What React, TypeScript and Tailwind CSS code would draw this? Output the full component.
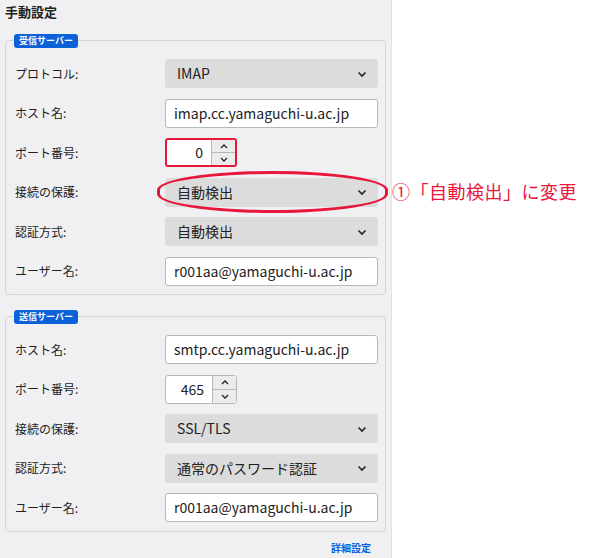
import React from "react";

const font = { fontFamily: '"Noto Sans CJK JP", "Noto Sans", sans-serif' };

function Chevron() {
  return (
    <svg width="12" height="12" viewBox="0 0 12 12" className="mr-[10px]">
      <path d="M2.5 4.5 L6 8 L9.5 4.5" fill="none" stroke="#222" strokeWidth="1.6" />
    </svg>
  );
}

function Select({ value }: { value: string }) {
  return (
    <div className="w-[213px] h-[29px] bg-[#dcdcdc] rounded-[3px] flex items-center justify-between">
      <span className="pl-3 text-[14px] text-[#222]">{value}</span>
      <Chevron />
    </div>
  );
}

function Input({ value }: { value: string }) {
  return (
    <div className="w-[213px] h-[29px] bg-white border border-[#b8b8b8] rounded-[3px] flex items-center">
      <span className="pl-2 text-[14px] text-[#222]">{value}</span>
    </div>
  );
}

function Spin({ value, red }: { value: string; red?: boolean }) {
  return (
    <div className={`w-[72px] h-[29px] bg-white rounded-[3px] flex ${red ? "border-2 border-[#e8163a]" : "border border-[#b8b8b8]"}`}>
      <div className="flex-1 flex items-center justify-end pr-2 text-[14px] text-[#222]">{value}</div>
      <div className="w-[24px] flex flex-col border-l border-[#b8b8b8]">
        <div className="flex-1 flex items-center justify-center bg-[#ececec] border-b border-[#b8b8b8]">
          <svg width="10" height="7" viewBox="0 0 10 7"><path d="M2 5 L5 2 L8 5" fill="none" stroke="#222" strokeWidth="1.3" /></svg>
        </div>
        <div className="flex-1 flex items-center justify-center bg-[#ececec]">
          <svg width="10" height="7" viewBox="0 0 10 7"><path d="M2 2 L5 5 L8 2" fill="none" stroke="#222" strokeWidth="1.3" /></svg>
        </div>
      </div>
    </div>
  );
}

function Row({ label, children }: { label: string; children: React.ReactNode }) {
  return (
    <div className="h-[39.5px] flex items-center">
      <div className="w-[159px] pl-[9px] text-[12px] text-[#222]">{label}</div>
      {children}
    </div>
  );
}

function Group({ legend, children }: { legend: string; children: React.ReactNode }) {
  return (
    <div className="relative ml-[5px] mr-[5px] border border-[#d4d4d8] rounded-[4px]">
      <div className="absolute left-[8px] -top-[7px] bg-[#0b61d8] text-white text-[9px] font-bold px-[5px] h-[14px] leading-[14px] rounded-[3px]">{legend}</div>
      <div className="pt-[13px] pb-[3px]">{children}</div>
    </div>
  );
}

export default function App() {
  return (
    <div style={font} className="w-[597px] h-[558px] bg-white flex">
      <div className="w-[392px] h-full bg-[#f0f0f2] border-r border-[#e2e2e2] relative shrink-0">
        <div className="pl-[5px] pt-[2px] text-[13px] font-bold text-[#222] h-[40px]">手動設定</div>
        <Group legend="受信サーバー">
          <Row label="プロトコル:"><Select value="IMAP" /></Row>
          <Row label="ホスト名:"><Input value="imap.cc.yamaguchi-u.ac.jp" /></Row>
          <Row label="ポート番号:"><Spin value="0" red /></Row>
          <Row label="接続の保護:"><Select value="自動検出" /></Row>
          <Row label="認証方式:"><Select value="自動検出" /></Row>
          <Row label="ユーザー名:"><Input value="r001aa@yamaguchi-u.ac.jp" /></Row>
        </Group>
        <div className="h-[21px]" />
        <Group legend="送信サーバー">
          <Row label="ホスト名:"><Input value="smtp.cc.yamaguchi-u.ac.jp" /></Row>
          <Row label="ポート番号:"><Spin value="465" /></Row>
          <Row label="接続の保護:"><Select value="SSL/TLS" /></Row>
          <Row label="認証方式:"><Select value="通常のパスワード認証" /></Row>
          <Row label="ユーザー名:"><Input value="r001aa@yamaguchi-u.ac.jp" /></Row>
        </Group>
        <div className="flex justify-end pr-[20px] pt-[8px] text-[10px] font-bold text-[#0b61d8]">詳細設定</div>
        <div className="absolute left-[157px] top-[171px] w-[231px] h-[42px] border-[3px] border-[#e8163a] rounded-[50%/45%]" />
      </div>
      <div className="pt-[178px] pl-[0px] text-[18px] text-[#e8163a] whitespace-nowrap tracking-[0.5px]">①「自動検出」に変更</div>
    </div>
  );
}
